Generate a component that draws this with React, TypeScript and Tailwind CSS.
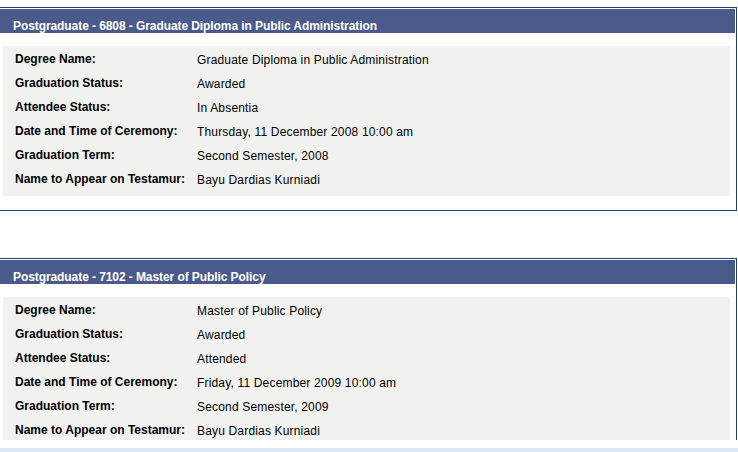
import React from "react";

type Row = [string, string];

const panels: { title: string; rows: Row[]; clip?: boolean }[] = [
  {
    title: "Postgraduate - 6808 - Graduate Diploma in Public Administration",
    rows: [
      ["Degree Name:", "Graduate Diploma in Public Administration"],
      ["Graduation Status:", "Awarded"],
      ["Attendee Status:", "In Absentia"],
      ["Date and Time of Ceremony:", "Thursday, 11 December 2008 10:00 am"],
      ["Graduation Term:", "Second Semester, 2008"],
      ["Name to Appear on Testamur:", "Bayu Dardias Kurniadi"],
    ],
  },
  {
    title: "Postgraduate - 7102 - Master of Public Policy",
    clip: true,
    rows: [
      ["Degree Name:", "Master of Public Policy"],
      ["Graduation Status:", "Awarded"],
      ["Attendee Status:", "Attended"],
      ["Date and Time of Ceremony:", "Friday, 11 December 2009 10:00 am"],
      ["Graduation Term:", "Second Semester, 2009"],
      ["Name to Appear on Testamur:", "Bayu Dardias Kurniadi"],
    ],
  },
];

function Panel({ title, rows, clip }: { title: string; rows: Row[]; clip?: boolean }) {
  return (
    <div
      className={
        "w-[737px] bg-white border-t border-r border-[#24406f] pt-[1px] pr-[1px] " +
        (clip ? "" : "border-b pb-[14px]")
      }
    >
      <div className="h-[24px] bg-[#4a5a8a] pl-[13px] pt-[10px] text-white font-bold text-[12px] leading-[14px] tracking-[-0.08px] whitespace-nowrap">
        {title}
      </div>
      <div
        className={
          "ml-[3px] mt-[13px] w-[727px] bg-[#f1f2ef] pt-[6px] " +
          (clip ? "h-[143px] overflow-hidden" : "h-[150px]")
        }
      >
        {rows.map(([label, value]) => (
          <div key={label} className="flex h-[24px] text-[12px] leading-[14px] text-black">
            <div className="w-[194px] pl-[12px] font-bold whitespace-nowrap">{label}</div>
            <div className="pt-[1px] tracking-[0.17px] whitespace-nowrap">{value}</div>
          </div>
        ))}
      </div>
    </div>
  );
}

export default function App() {
  return (
    <div
      className="w-[738px] h-[452px] bg-white pt-[7px] overflow-hidden"
      style={{ fontFamily: '"Liberation Sans", Arial, sans-serif' }}
    >
      <Panel {...panels[0]} />
      <div className="h-[47px]" />
      <Panel {...panels[1]} />
      <div className="h-[8px]" />
      <div className="h-[4px] bg-[#dfe9f6]" />
    </div>
  );
}
